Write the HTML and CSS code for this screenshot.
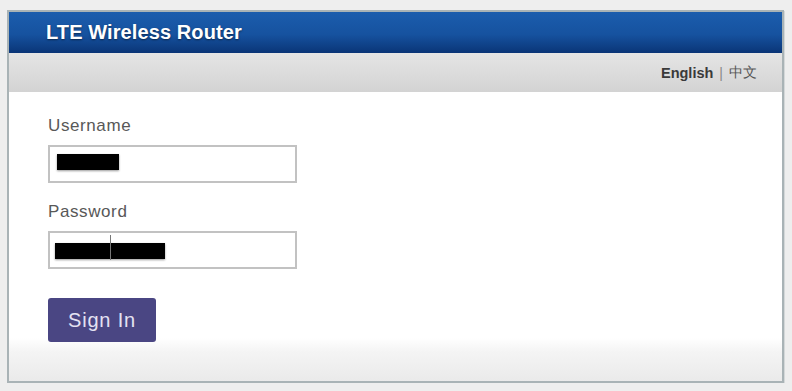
FILE: index.html
```html
<!DOCTYPE html>
<html lang="en">
<head>
    <meta charset="UTF-8">
    <meta name="viewport" content="width=device-width, initial-scale=1.0">
    <title>LTE Wireless Router</title>
    <link rel="stylesheet" href="styles.css">
</head>
<body>

    <div class="login-box">
        <header class="title-bar">
            <h1>LTE Wireless Router</h1>
        </header>

        <!-- Language switch -->
        <div class="lang-bar">
            <span class="lang-current">English</span>
            <span class="lang-sep">|</span>
            <span class="lang-other">中文</span>
        </div>

        <!-- Login form -->
        <div class="login-form">
            <div class="field">
                <label>Username</label>
                <div class="text-box">
                    <span class="redact redact-user"></span>
                </div>
            </div>
            <div class="field">
                <label>Password</label>
                <div class="text-box">
                    <span class="redact redact-pass"><span class="caret"></span></span>
                </div>
            </div>
            <button class="sign-in">Sign In</button>
        </div>
    </div>

</body>
</html>
```

FILE: styles.css
```css
body {
    margin: 0;
    padding: 10px 8px 0 7px;
    background-color: #eeeeee;
    font-family: "Liberation Sans", Arial, sans-serif;
}

.login-box {
    width: 777px;
    height: 373px;
    box-sizing: border-box;
    border: 2px solid #a9b3b6;
    box-shadow: 1px 1px 0 #d4d8d9;
    background: linear-gradient(#ffffff 0, #ffffff 326px, #f4f4f4 340px, #eaeaea 100%);
    display: flex;
    flex-direction: column;
}

.title-bar {
    height: 41px;
    display: flex;
    align-items: center;
    padding-left: 37px;
    background: linear-gradient(#1b5dad 0%, #16529f 55%, #0a3577 100%);
}

.title-bar h1 {
    margin: 0;
    color: #ffffff;
    font-size: 20px;
    font-weight: bold;
    letter-spacing: 0.1px;
    text-shadow: 0 1px 2px rgba(0, 0, 0, 0.5);
}

.lang-bar {
    height: 39px;
    display: flex;
    align-items: center;
    justify-content: flex-end;
    gap: 6px;
    padding-right: 25px;
    background: linear-gradient(#e5e5e5, #d3d3d3);
    font-size: 14px;
    color: #555;
}

.lang-current {
    font-size: 14.5px;
    font-weight: bold;
    color: #3a3a3a;
}

.lang-sep {
    color: #888;
}

.lang-other {
    color: #555;
}

.login-form {
    padding: 25px 0 0 39px;
}

.field {
    margin-bottom: 20px;
}

.field label {
    display: block;
    font-size: 17px;
    line-height: 18px;
    letter-spacing: 0.6px;
    color: #585858;
    margin-bottom: 10px;
}

.text-box {
    width: 249px;
    height: 38px;
    box-sizing: border-box;
    border: 2px solid #c2c2c2;
    background-color: #fff;
    display: flex;
    align-items: center;
    padding-left: 5px;
}

.redact {
    display: block;
    position: relative;
    height: 16px;
    background-color: #000;
    box-shadow: 0 1px 2px rgba(0, 0, 0, 0.4);
}

.redact-user {
    width: 62px;
    margin-top: -4px;
    margin-left: 2px;
}

.redact-pass {
    width: 110px;
    margin-top: 1px;
}

.caret {
    position: absolute;
    left: 55px;
    top: -8px;
    width: 1px;
    height: 25px;
    background-color: #777;
}

.sign-in {
    margin-top: 9px;
    width: 108px;
    height: 44px;
    border: none;
    border-radius: 3px;
    background-color: #4a4683;
    color: #e4e2f2;
    font-family: "Liberation Sans", Arial, sans-serif;
    font-size: 20px;
    letter-spacing: 0.8px;
    padding: 0;
}
```
